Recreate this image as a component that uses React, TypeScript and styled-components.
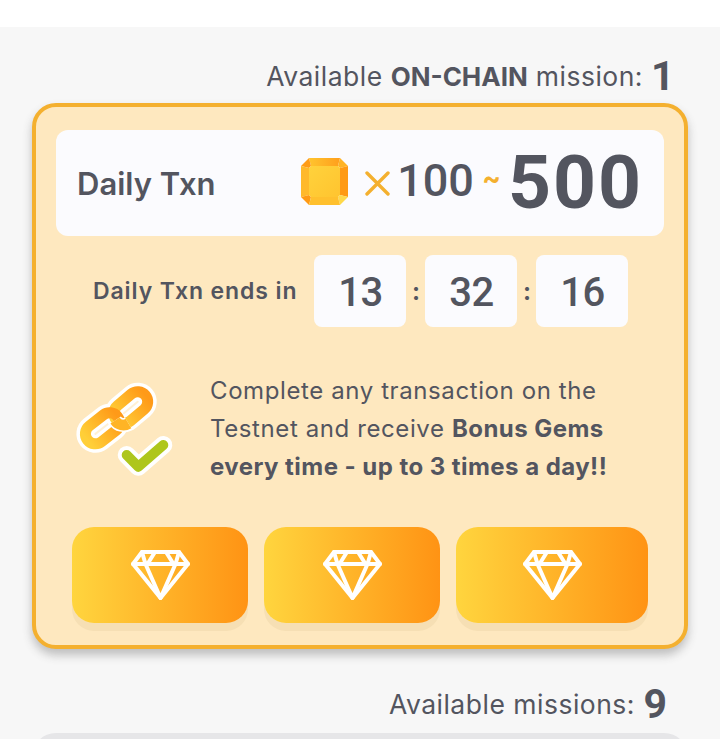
import styled, { createGlobalStyle } from "styled-components";

const GlobalStyle = createGlobalStyle`
  html, body {
    margin: 0;
    padding: 0;
    height: 739px;
    overflow: hidden;
    background: #ffffff;
    font-family: "Inter", "Noto Sans", sans-serif;
    color: #53555f;
  }
`;

const Page = styled.main`
  margin-top: 27px;
  height: 712px;
  overflow: hidden;
  background: #f7f7f7;
  padding: 0 32px;
`;

const CountLine = styled.div<{ $top: number }>`
  display: flex;
  align-items: center;
  justify-content: flex-end;
  gap: 8px;
  height: 40px;
  margin-top: ${(props) => props.$top}px;
  padding-right: 21px;
  font-size: 26.5px;
  letter-spacing: 0.5px;
  b {
    font-size: 26px;
    font-weight: 700;
    letter-spacing: 0;
  }
`;

const CountNumber = styled.span<{ $width: number }>`
  width: ${(props) => props.$width}px;
  text-align: right;
  font-family: "Roboto", sans-serif;
  font-size: 41px;
  font-weight: 700;
  letter-spacing: 0;
`;

const Card = styled.section`
  box-sizing: border-box;
  width: 656px;
  height: 546px;
  margin-top: 7px;
  padding: 23px 20px 0;
  background: #fee8bf;
  border: 4px solid #f4b02f;
  border-radius: 24px;
  box-shadow: 0 6px 10px rgba(60, 60, 60, 0.3);
`;

const RewardPanel = styled.div`
  display: flex;
  align-items: center;
  height: 106px;
  padding: 0 21px;
  background: #fbfbfe;
  border-radius: 12px;
`;

const RewardTitle = styled.h2`
  flex: 1;
  margin: 0;
  font-size: 31px;
  font-weight: 600;
`;

const GemSlot = styled.span`
  display: flex;
  margin-bottom: 4px;
`;

const Multiply = styled.span`
  margin: 0 7px 0 17px;
  display: flex;
`;

const RewardMin = styled.span`
  margin-bottom: 5px;
  font-family: "Roboto", sans-serif;
  font-size: 45px;
  font-weight: 500;
`;

const Tilde = styled.span`
  margin: 0 7px 10px 8px;
  font-size: 28px;
  font-weight: 700;
  color: #f4b02f;
`;

const RewardMax = styled.span`
  margin-bottom: 3px;
  font-family: "Roboto", sans-serif;
  font-size: 75px;
  font-weight: 700;
  letter-spacing: 2px;
`;

const TimerRow = styled.div`
  display: flex;
  align-items: center;
  height: 72px;
  margin-top: 19px;
  padding-left: 37px;
`;

const TimerLabel = styled.span`
  margin-right: 17px;
  font-size: 23px;
  font-weight: 600;
  letter-spacing: 0.9px;
`;

const TimerBox = styled.span`
  display: flex;
  align-items: center;
  justify-content: center;
  box-sizing: border-box;
  width: 92px;
  height: 72px;
  padding-top: 3px;
  background: #fbfbfe;
  border-radius: 8px;
  font-family: "Roboto", sans-serif;
  font-size: 40px;
  font-weight: 500;
  letter-spacing: -0.5px;
`;

const TimerColon = styled.span`
  width: 19px;
  text-align: center;
  font-size: 24px;
  font-weight: 700;
`;

const InfoRow = styled.div`
  display: flex;
  align-items: center;
  height: 120px;
  margin-top: 43px;
  padding-left: 4px;
`;

const InfoIcon = styled.div`
  display: flex;
  width: 150px;
  flex: none;
`;

const InfoText = styled.p`
  margin: 0 0 2px;
  font-size: 24px;
  line-height: 38px;
  letter-spacing: 0.6px;
  white-space: nowrap;
  b {
    font-weight: 700;
    letter-spacing: 0.45px;
  }
`;

const GemButtons = styled.div`
  display: grid;
  grid-template-columns: 176px 176px 192px;
  gap: 16px;
  margin-top: 37px;
  padding-left: 16px;
`;

const GemButton = styled.button`
  display: flex;
  align-items: center;
  justify-content: center;
  height: 96px;
  padding: 0;
  border: none;
  border-radius: 22px;
  background: linear-gradient(90deg, #ffd53e 0%, #ff9314 100%);
  box-shadow: 0 8px 0 #f6dfb4;
`;

const NextList = styled.div`
  width: 656px;
  height: 40px;
  margin-top: 9px;
  background: #e6e6e8;
  border-radius: 24px 24px 0 0;
`;

const SquareGem = () => (
  <svg width="47" height="47" viewBox="0 0 47 47">
    <defs>
      <linearGradient id="gemFace" x1="0" y1="0" x2="1" y2="1">
        <stop offset="0" stopColor="#ffd23c" />
        <stop offset="1" stopColor="#ffc42f" />
      </linearGradient>
      <linearGradient id="gemTop" x1="0" y1="0" x2="1" y2="0">
        <stop offset="0" stopColor="#ffc42e" />
        <stop offset="1" stopColor="#ff9f1c" />
      </linearGradient>
    </defs>
    <polygon points="8,0 39,0 37,8 10,8" fill="url(#gemTop)" />
    <polygon points="8,0 10,8 8,10 0,8" fill="#ff9c18" />
    <polygon points="39,0 47,8 39,10 37,8" fill="#ffb325" />
    <polygon points="47,8 47,39 39,37 39,10" fill="#ff9a14" />
    <polygon points="0,8 8,10 8,37 0,39" fill="#ffb92b" />
    <polygon points="0,39 8,37 10,39 8,47" fill="#ff9a14" />
    <polygon points="47,39 39,47 37,39 39,37" fill="#ffd94a" />
    <polygon points="10,39 37,39 39,47 8,47" fill="#ffc02e" />
    <polygon points="10,8 37,8 39,10 39,37 37,39 10,39 8,37 8,10" fill="url(#gemFace)" />
  </svg>
);

const CrossMark = () => (
  <svg width="25" height="25" viewBox="0 0 25 25">
    <path d="M2 2 L23 23 M23 2 L2 23" stroke="#f4b02f" strokeWidth="3.4" strokeLinecap="round" />
  </svg>
);

const ChainIcon = () => (
  <svg width="130" height="120" viewBox="0 0 130 120">
    <defs>
      <linearGradient id="chainLink" x1="0" y1="0" x2="1" y2="0">
        <stop offset="0" stopColor="#ffcf38" />
        <stop offset="1" stopColor="#ff9a18" />
      </linearGradient>
    </defs>
    <g fill="none" strokeLinecap="round" strokeLinejoin="round">
      <rect x="-19" y="-10" width="38" height="20" rx="10" transform="translate(42.5 58.3) rotate(-38)" stroke="#fff" strokeWidth="18" fill="#fff1d4" />
      <rect x="-19" y="-10" width="38" height="20" rx="10" transform="translate(70.8 37.5) rotate(-40)" stroke="#fff" strokeWidth="18" fill="#fff1d4" />
      <rect x="-19" y="-10" width="38" height="20" rx="10" transform="translate(70.8 37.5) rotate(-40)" stroke="url(#chainLink)" strokeWidth="11" />
      <rect x="-19" y="-10" width="38" height="20" rx="10" transform="translate(42.5 58.3) rotate(-38)" stroke="url(#chainLink)" strokeWidth="11" />
      <path d="M55 50.5 A10 10 0 0 0 68.5 53.5" stroke="#fff" strokeWidth="14" strokeLinecap="butt" />
      <path d="M55 50.5 A10 10 0 0 0 68.5 53.5" stroke="#ffb425" strokeWidth="11" strokeLinecap="butt" />
      <path d="M66.7 85 L78.3 96.7 L103.3 75" stroke="#fff" strokeWidth="18" />
      <path d="M66.7 85 L78.3 96.7 L103.3 75" stroke="#aec61c" strokeWidth="10" />
    </g>
  </svg>
);

const DiamondIcon = () => (
  <svg width="61" height="52" viewBox="0 0 61 52" fill="none" stroke="#fff" strokeWidth="4" strokeLinejoin="round" strokeLinecap="round">
    <path d="M12 3 H49 L58 15 L30.5 49 L3 15 Z" />
    <path d="M3 15 H58 M12 3 L15.5 15 L30.5 49 L45.5 15 L49 3 M25 3 L17.5 15 M36 3 L43.5 15" />
  </svg>
);

const App = () => {
  return (
    <>
      <GlobalStyle />
      <Page>
        <CountLine $top={29}>
          <span>
            Available <b>ON-CHAIN</b> mission:
          </span>
          <CountNumber $width={16}>1</CountNumber>
        </CountLine>
        <Card>
          <RewardPanel>
            <RewardTitle>Daily Txn</RewardTitle>
            <GemSlot>
              <SquareGem />
            </GemSlot>
            <Multiply>
              <CrossMark />
            </Multiply>
            <RewardMin>100</RewardMin>
            <Tilde>~</Tilde>
            <RewardMax>500</RewardMax>
          </RewardPanel>
          <TimerRow>
            <TimerLabel>Daily Txn ends in</TimerLabel>
            <TimerBox>13</TimerBox>
            <TimerColon>:</TimerColon>
            <TimerBox>32</TimerBox>
            <TimerColon>:</TimerColon>
            <TimerBox>16</TimerBox>
          </TimerRow>
          <InfoRow>
            <InfoIcon>
              <ChainIcon />
            </InfoIcon>
            <InfoText>
              Complete any transaction on the
              <br />
              Testnet and receive <b>Bonus Gems</b>
              <br />
              <b>every time - up to 3 times a day!!</b>
            </InfoText>
          </InfoRow>
          <GemButtons>
            <GemButton>
              <DiamondIcon />
            </GemButton>
            <GemButton>
              <DiamondIcon />
            </GemButton>
            <GemButton>
              <DiamondIcon />
            </GemButton>
          </GemButtons>
        </Card>
        <CountLine $top={35}>
          <span>Available missions:</span>
          <CountNumber $width={24}>9</CountNumber>
        </CountLine>
        <NextList />
      </Page>
    </>
  );
};

export default App;
